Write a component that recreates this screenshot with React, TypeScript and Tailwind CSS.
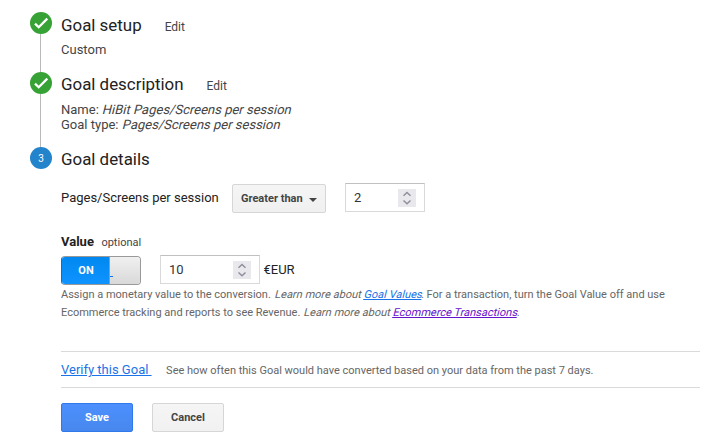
import type { ReactNode } from "react";

function CheckBadge() {
  return (
    <svg className="block size-[22px] shrink-0" viewBox="0 0 22 22">
      <circle cx="11" cy="11" r="11" fill="#36a135" />
      <path d="M5 11.6l3.7 3.6 8.6-8.6" fill="none" stroke="#fff" strokeWidth="2.3" />
    </svg>
  );
}

// Slanted regular face, wider than Roboto's own italic
function Slanted({ children }: { children: ReactNode }) {
  return <em className="inline-block origin-[0_75%] -skew-x-14 whitespace-pre not-italic">{children}</em>;
}

function Step({ badge, line, className, children }: { badge: ReactNode; line?: boolean; className?: string; children: ReactNode }) {
  return (
    <div className={`flex gap-[9px] ${className ?? ""}`}>
      <div className="flex w-[22px] shrink-0 flex-col">
        {badge}
        {line && <div className="ml-[10px] w-px flex-1 bg-[#b9b9b9]" />}
      </div>
      <div className="min-w-0 flex-1">{children}</div>
    </div>
  );
}

function NumberField({ value, className }: { value: string; className: string }) {
  return (
    <div className={`flex h-[29px] items-center justify-between border border-[#d9d9d9] border-t-[#c0c0c0] bg-white px-2 text-[13px] text-[#333] ${className}`}>
      <span>{value}</span>
      <svg className="h-[18px] w-[18px] bg-[#e9e9ed]" viewBox="0 0 18 18" fill="none" stroke="#8f8f9d" strokeWidth="1.5">
        <path d="M5.5 6.8L9 3.5l3.5 3.3M5.5 11.5L9 14.8l3.5-3.3" />
      </svg>
    </div>
  );
}

export default function App() {
  return (
    <div className="h-[439px] w-[710px] overflow-hidden bg-white pt-3 pl-[30px] font-['Roboto',sans-serif] text-[13px] leading-[15px] text-[#222]">
      <Step badge={<CheckBadge />} line className="h-[60px]">
        <div className="flex items-baseline gap-[23px] leading-[26px]">
          <h2 className="text-[16.9px]">Goal setup</h2>
          <span className="text-xs text-[#444]">Edit</span>
        </div>
        <p className="pt-1 text-[#444]">Custom</p>
      </Step>

      <Step badge={<CheckBadge />} line className="h-[75px]">
        <div className="flex items-baseline gap-[23px] leading-[24px]">
          <h2 className="text-[16.9px]">Goal description</h2>
          <span className="text-xs text-[#444]">Edit</span>
        </div>
        <div className="pt-1.5 text-[#444]">
          <p>Name: <Slanted>HiBit Pages/Screens per session</Slanted></p>
          <p>Goal type: <Slanted>Pages/Screens per session</Slanted></p>
        </div>
      </Step>

      <Step
        badge={
          <div className="flex size-[22px] items-center justify-center rounded-full bg-[#2484cb] text-[10px] text-white">3</div>
        }
      >
        <h2 className="text-[16.9px] leading-[24px]">Goal details</h2>

        <div className="flex h-[42px] items-start pt-3">
          <span className="w-[171px] pt-[7px]">Pages/Screens per session</span>
          <button className="mt-px flex h-[29px] w-[94px] items-center justify-between rounded-xs border border-[#d6d6d6] bg-linear-to-b from-[#f5f5f5] to-[#f0f0f0] px-2 text-[11px] font-bold text-[#444]">
            Greater than
            <svg className="mt-[3px] h-1 w-2" viewBox="0 0 8 4" fill="#444">
              <path d="M0 0h8L4 4z" />
            </svg>
          </button>
          <NumberField value="2" className="ml-[19px] w-20" />
        </div>

        <div className="mt-[21px] flex h-[15px] items-baseline gap-[7.5px]">
          <span className="font-bold">Value</span>
          <span className="text-[11px] text-[#444]">optional</span>
        </div>

        <div className="flex h-9 items-start pt-[6px]">
          <div className="mt-px flex h-[29px] w-20 overflow-hidden rounded-[4px] border border-[#999] border-l-[#0072cf]">
            <div className="-my-px flex w-[47px] items-center justify-center border-y border-[#0068bd] bg-linear-to-b from-[#0088f0] to-[#0f94ff] pl-px text-[11px] font-bold text-white">ON</div>
            <div className="flex flex-1 items-end border-l border-[#999] bg-linear-to-b from-[#f0f0f0] to-[#d9d9d9] pb-[7px]">
              <div className="h-px w-[3px] bg-[#1a73e8]" />
            </div>
          </div>
          <NumberField value="10" className="ml-[19px] w-[100px]" />
          <span className="pt-[7px] pl-[3.5px]">€EUR</span>
        </div>

        <p className="w-[640px] pt-px text-[11px] leading-[18px] text-[#666]">
          Assign a monetary value to the conversion. <Slanted>Learn more about <a className="text-[#1a73e8] underline">Goal Values</a></Slanted>. For a transaction, turn the Goal Value off and use
          <br />
          Ecommerce tracking and reports to see Revenue. <Slanted>Learn more about <a className="text-[#6611cc] underline">Ecommerce Transactions</a></Slanted>.
        </p>

        <div className="mt-[29px] flex h-[37px] w-[639px] items-center gap-[14.5px] border-y border-[#dadada]">
          <a className="text-[13px] whitespace-pre text-[#1a73e8] underline">{"Verify this Goal "}</a>
          <span className="pt-px text-[11px] text-[#666]">See how often this Goal would have converted based on your data from the past 7 days.</span>
        </div>

        <div className="flex gap-[19px] pt-[15px] text-[11px] font-bold">
          <button className="h-[29px] w-[72px] rounded-xs border border-[#3079ed] bg-linear-to-b from-[#4d90fe] to-[#4787ed] text-white">Save</button>
          <button className="h-[29px] w-[72px] rounded-xs border border-[#d6d6d6] bg-linear-to-b from-[#f5f5f5] to-[#f1f1f1] text-[#444]">Cancel</button>
        </div>
      </Step>
    </div>
  );
}
